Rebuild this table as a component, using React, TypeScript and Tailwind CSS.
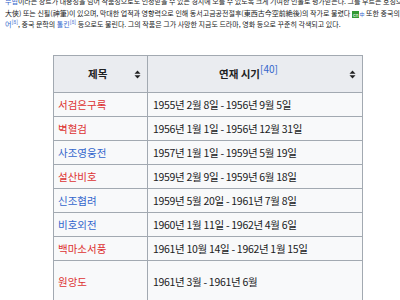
const rows: { title: string; red: boolean; period: string }[] = [
  { title: '서검은구록', red: true, period: '1955년 2월 8일 - 1956년 9월 5일' },
  { title: '벽혈검', red: true, period: '1956년 1월 1일 - 1956년 12월 31일' },
  { title: '사조영웅전', red: false, period: '1957년 1월 1일 - 1959년 5월 19일' },
  { title: '설산비호', red: true, period: '1959년 2월 9일 - 1959년 6월 18일' },
  { title: '신조협려', red: false, period: '1959년 5월 20일 - 1961년 7월 8일' },
  { title: '비호외전', red: false, period: '1960년 1월 11일 - 1962년 4월 6일' },
  { title: '백마소서풍', red: true, period: '1961년 10월 14일 - 1962년 1월 15일' },
]

function SortIcon() {
  return (
    <svg width="7" height="9" viewBox="0 0 7 9" className="shrink-0">
      <path d="M0.5 3.8 L3.5 0.5 L6.5 3.8 Z" fill="#202122" />
      <path d="M0.5 5.2 L3.5 8.5 L6.5 5.2 Z" fill="#202122" />
    </svg>
  )
}

export default function App() {
  return (
    <div
      className="h-[300px] w-[400px] overflow-hidden bg-white text-[#202122]"
      style={{ fontFamily: '"Noto Sans CJK KR", "Noto Sans", sans-serif' }}
    >
      <div className="-mt-[4px] h-[33px] px-[5px] text-[7px] leading-[11px]">
        <div className="h-[12px] whitespace-nowrap">
          <span className="text-[#3366cc]">무협</span>이라는 장르가 대중성을 넘어 작품성으로도 인정받을 수 있는 경지에 오를 수 있도록 크게 기여한 인물로 평가받는다. 그를 부르는 호칭으로는 대협(
        </div>
        <div className="h-[11px] whitespace-nowrap">
          大俠) 또는 신필(神筆)이 있으며, 막대한 업적과 영향력으로 인해 동서고금공전절후(東西古今空前絶後)의 작가로 불렸다{' '}
          <span className="inline-block bg-[#339933] px-[1px] align-middle text-[5px] leading-[7px] text-white">cn</span>
          <span className="text-[5px] text-[#3366cc]">中</span> 또한 중국의 <span className="text-[#3366cc]">셰익스피</span>
        </div>
        <div className="h-[10px] whitespace-nowrap">
          <span className="text-[#3366cc]">어</span>
          <sup className="text-[#3366cc]">[8]</sup>, 중국 문학의 <span className="text-[#3366cc]">톨킨</span>
          <sup className="text-[#3366cc]">[8]</sup> 등으로도 불린다. 그의 작품은 그가 사망한 지금도 드라마, 영화 등으로 꾸준히 각색되고 있다.
        </div>
      </div>

      <table className="ml-[53px] mt-[26px] border-collapse text-[10.5px]">
        <thead>
          <tr className="h-[37px] bg-[#eaecf0]">
            <th className="w-[94px] border border-[#a2a9b1] px-[6px] font-bold">
              <div className="flex items-center justify-between pl-[28px]">
                <span>제목</span>
                <SortIcon />
              </div>
            </th>
            <th className="w-[215px] border border-[#a2a9b1] px-[6px] font-bold">
              <div className="flex items-center justify-between pl-[65px]">
                <span>
                  연재 시기<sup className="text-[10px] font-normal text-[#3366cc]">[40]</sup>
                </span>
                <SortIcon />
              </div>
            </th>
          </tr>
        </thead>
        <tbody>
          {rows.map((r) => (
            <tr key={r.title} className="h-[24px] bg-[#f8f9fa]">
              <td className={`border border-[#a2a9b1] px-[4px] ${r.red ? 'text-[#dd3333]' : 'text-[#3366cc]'}`}>
                {r.title}
              </td>
              <td className="border border-[#a2a9b1] px-[5px] tracking-[-0.3px]">{r.period}</td>
            </tr>
          ))}
          <tr className="h-[42px] bg-[#f8f9fa]">
            <td className="border border-[#a2a9b1] px-[4px] text-[#dd3333]">원앙도</td>
            <td className="border border-[#a2a9b1] px-[5px] tracking-[-0.3px]">1961년 3월 - 1961년 6월</td>
          </tr>
        </tbody>
      </table>
    </div>
  )
}
